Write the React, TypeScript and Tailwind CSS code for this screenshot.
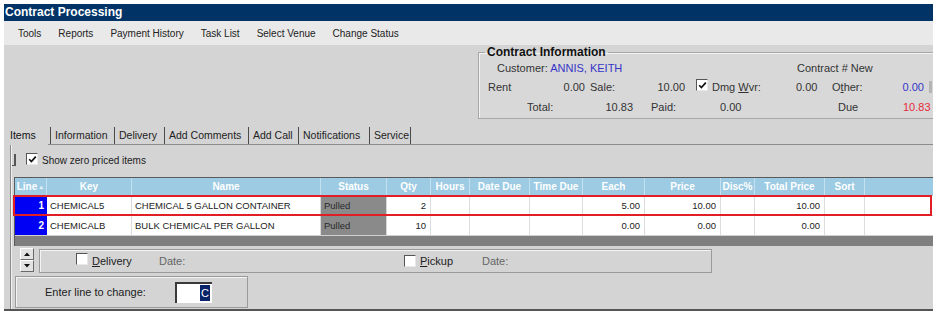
import React from "react";

const menu = ["Tools", "Reports", "Payment History", "Task List", "Select Venue", "Change Status"];

const tabs = [
  { label: "Information", w: "w-[64px]" },
  { label: "Delivery", w: "w-[50px]" },
  { label: "Add Comments", w: "w-[84px]" },
  { label: "Add Call", w: "w-[50px]" },
  { label: "Notifications", w: "w-[71px]" },
  { label: "Service", w: "w-[42px]" },
];

type Col = { label: string; w: string; right?: boolean };

const cols: Col[] = [
  { label: "Line", w: "w-[32px]", right: true },
  { label: "Key", w: "w-[85px]" },
  { label: "Name", w: "w-[189px]" },
  { label: "Status", w: "w-[66px]" },
  { label: "Qty", w: "w-[44px]", right: true },
  { label: "Hours", w: "w-[39px]", right: true },
  { label: "Date Due", w: "w-[60px]" },
  { label: "Time Due", w: "w-[53px]" },
  { label: "Each", w: "w-[62px]", right: true },
  { label: "Price", w: "w-[76px]", right: true },
  { label: "Disc%", w: "w-[34px]", right: true },
  { label: "Total Price", w: "w-[70px]", right: true },
  { label: "Sort", w: "w-[40px]" },
];

const rows = [
  ["1", "CHEMICAL5", "CHEMICAL 5 GALLON CONTAINER", "Pulled", "2", "", "", "", "5.00", "10.00", "", "10.00", ""],
  ["2", "CHEMICALB", "BULK CHEMICAL PER GALLON", "Pulled", "10", "", "", "", "0.00", "0.00", "", "0.00", ""],
];

function Check({ checked }: { checked?: boolean }) {
  return (
    <span className="inline-flex h-[12px] w-[12px] shrink-0 items-center justify-center border-t border-l border-[#555] border-r border-b border-r-[#e8e8e8] border-b-[#e8e8e8] bg-white">
      {checked && (
        <svg width="9" height="9" viewBox="0 0 9 9">
          <path d="M1.2 4.2 L3.4 6.6 L7.8 1.6" fill="none" stroke="#111" strokeWidth="1.7" />
        </svg>
      )}
    </span>
  );
}

function ContractInfo() {
  return (
    <fieldset className="ml-auto h-[74px] w-[455px] border border-r-0 border-[#a7a7a7] bg-[#d8d8d8] text-[11px] text-[#333] shadow-[inset_1px_1px_0_#f2f2f2]">
      <legend className="ml-[6px] px-[2px] text-[12px] font-bold leading-[14px] text-[#111]">Contract Information</legend>
      <div className="flex h-[18px] items-center">
        <span className="ml-[18px] w-[300px]">
          Customer: <span className="text-[#3535c8]">ANNIS, KEITH</span>
        </span>
        <span>Contract # New</span>
      </div>
      <div className="mt-[1px] flex h-[18px] items-center">
        <span className="ml-[9px] w-[60px]">Rent</span>
        <span className="w-[37px] text-right">0.00</span>
        <span className="ml-[5px] w-[50px]">Sale:</span>
        <span className="w-[45px] text-right">10.00</span>
        <span className="ml-[11px] mt-[-2px]">
          <Check checked />
        </span>
        <span className="ml-[4px] w-[84px]">
          Dmg <span className="underline">W</span>vr:
        </span>
        <span className="w-[36px]">0.00</span>
        <span className="w-[70px]">
          O<span className="underline">t</span>her:
        </span>
        <span className="w-[22px] text-right text-[#3535c8]">0.00</span>
        <span className="ml-[5px] h-[12px] w-[3px] bg-[#b5b5b5]" />
      </div>
      <div className="mt-[2px] flex h-[18px] items-center">
        <span className="ml-[48px] w-[60px]">Total:</span>
        <span className="w-[46px] text-right">10.83</span>
        <span className="ml-[18px] w-[69px]">Paid:</span>
        <span className="w-[118px]">0.00</span>
        <span className="w-[65px]">Due</span>
        <span className="w-[27px] text-right text-[#e8283a]">10.83</span>
      </div>
    </fieldset>
  );
}

function Grid() {
  return (
    <div className="ml-[3px] flex flex-col border-t border-l border-[#5a5a5a] bg-[#7f7f7f]">
      <div className="flex h-[18px] bg-[#9ccbe3] text-[10px] font-bold leading-[18px] text-white">
        {cols.map((c) => (
          <div key={c.label} className={`${c.w} shrink-0 border-r border-[#c4e0ee] text-center whitespace-nowrap`}>
            {c.label}
            {c.label === "Line" && <span className="ml-[1px] text-[6px] align-top text-[#e6f2f8]">▲</span>}
          </div>
        ))}
        <div className="flex-1" />
      </div>
      {rows.map((r, i) => (
        <div key={i} className="relative flex h-[20px] border-b border-[#d0d0d0] bg-white text-[9.5px] leading-[19px] text-[#222]">
          {cols.map((c, j) => {
            if (j === 0)
              return (
                <div key={j} className={`${c.w} shrink-0 bg-[#0000f5] pr-[3px] text-right text-[10px] font-bold text-white`}>
                  {r[j]}
                </div>
              );
            if (j === 3)
              return (
                <div key={j} className={`${c.w} shrink-0 border-r border-[#d6d6d6] bg-[#8a8a8a] pl-[3px] text-[#2a2a2a]`}>
                  {r[j]}
                </div>
              );
            return (
              <div
                key={j}
                className={`${c.w} shrink-0 border-r border-[#dcdcdc] whitespace-nowrap ${c.right ? "pr-[4px] text-right" : "pl-[3px]"}`}
              >
                {r[j]}
              </div>
            );
          })}
          <div className="flex-1" />
          {i === 0 && (
            <div className="pointer-events-none absolute top-[-1px] bottom-[-1px] left-[-2px] right-[1px] border-2 border-[#e11d26]" />
          )}
        </div>
      ))}
      <div className="h-[10px] bg-[#7f7f7f]" />
    </div>
  );
}

function SpinBtn({ up }: { up?: boolean }) {
  return (
    <div className="flex h-[12px] w-[14px] items-center justify-center border border-t-white border-l-white border-r-[#6a6a6a] border-b-[#6a6a6a] bg-[#e2e2e2]">
      <svg width="6" height="4" viewBox="0 0 6 4">
        <path d={up ? "M0 4 L3 0.5 L6 4 Z" : "M0 0 L3 3.5 L6 0 Z"} fill="#111" />
      </svg>
    </div>
  );
}

export default function App() {
  return (
    <div className="h-[313px] w-[939px] overflow-hidden bg-white pt-[4px] pl-[4px] font-['Liberation_Sans',Arial,sans-serif] text-[#222]">
      <div className="flex h-[307px] w-[929px] flex-col border-b-2 border-[#555] bg-[#d4d4d4]">
        <div className="h-[17px] shrink-0 bg-[#013366] pl-[1px] text-[12px] font-bold leading-[17px] text-white">Contract Processing</div>
        <div className="flex h-[24px] shrink-0 items-center gap-[17px] bg-[#e9e9e9] pl-[14px] text-[10px] text-[#222]">
          {menu.map((m) => (
            <span key={m}>{m}</span>
          ))}
        </div>
        <div className="flex h-[75px] shrink-0">
          <ContractInfo />
        </div>
        <div className="ml-[4px] flex h-[25px] shrink-0 text-[10.5px]">
          <div className="w-[40px] pt-[8px] pl-[2px] text-[#111]">Items</div>
          <div className="flex flex-1 border-b border-[#8c8c8c] pl-[2px]">
            {tabs.map((t, i) => (
              <div
                key={t.label}
                className={`${t.w} mt-[7px] h-[17px] border-l border-[#4a4a4a] pl-[4px] leading-[16px] ${i === tabs.length - 1 ? "border-r" : ""}`}
              >
                {t.label}
              </div>
            ))}
          </div>
        </div>
        <div className="ml-[6px] flex flex-1 flex-col border-l border-[#8a8a8a] shadow-[inset_1px_0_0_#f0f0f0]">
          <div className="mt-[4px] flex h-[22px] items-center text-[10px]">
            <span className="ml-[1px] h-[12px] w-[4px] border-r-2 border-b border-[#555]" />
            <span className="ml-[10px]">
              <Check checked />
            </span>
            <span className="ml-[4px]">Show zero priced items</span>
          </div>
          <div className="mt-[6px]">
            <Grid />
          </div>
          <div className="mt-[2px] flex h-[25px] items-start">
            <div className="ml-[9px] flex flex-col">
              <SpinBtn up />
              <SpinBtn />
            </div>
            <div className="ml-[5px] mt-[1px] flex h-[24px] w-[673px] items-center border border-[#9a9a9a] text-[11px] shadow-[inset_1px_1px_0_#f4f4f4]">
              <span className="ml-[36px]">
                <Check />
              </span>
              <span className="ml-[4px] w-[67px]">
                <span className="underline">D</span>elivery
              </span>
              <span className="w-[245px] text-[#666]">Date:</span>
              <Check />
              <span className="ml-[4px] w-[62px]">
                <span className="underline">P</span>ickup
              </span>
              <span className="text-[#666]">Date:</span>
            </div>
          </div>
          <div className="mt-[3px] ml-[4px] flex h-[32px] w-[233px] items-center border border-[#9a9a9a] text-[11px] shadow-[inset_1px_1px_0_#f4f4f4]">
            <span className="ml-[29px] w-[130px]">Enter line to change:</span>
            <div className="flex h-[21px] w-[37px] items-center justify-end border-t-2 border-l-2 border-[#3a3a3a] bg-white pr-[2px]">
              <span className="bg-[#0a246a] px-[1px] leading-[16px] text-white">C</span>
            </div>
          </div>
        </div>
      </div>
    </div>
  );
}
